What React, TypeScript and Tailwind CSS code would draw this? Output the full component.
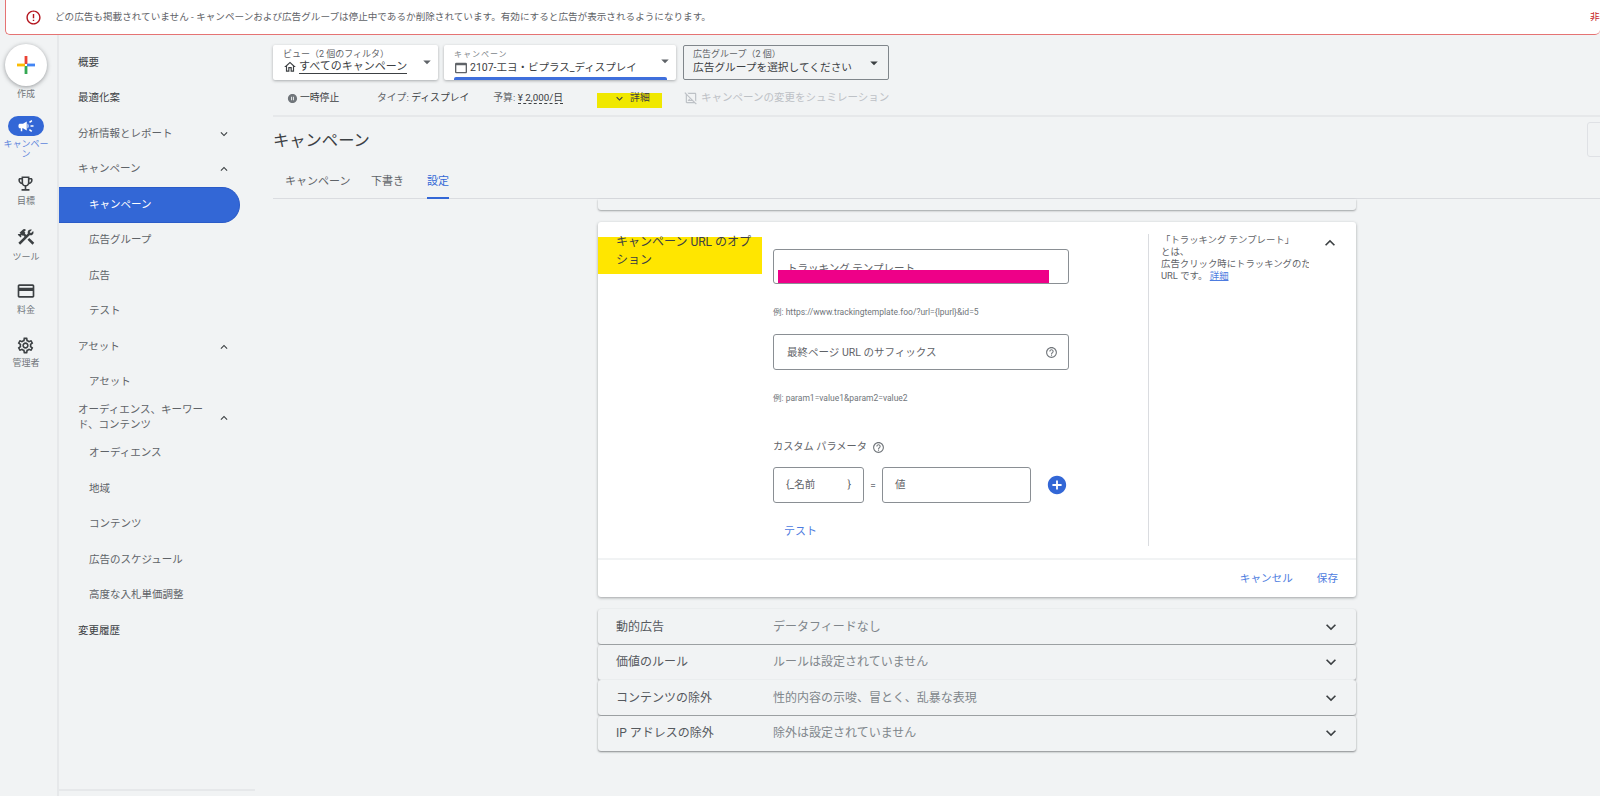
import type { ReactNode } from 'react';
import {
  MdArrowDropDown,
  MdAddCircle,
  MdCampaign,
  MdErrorOutline,
  MdExpandLess,
  MdExpandMore,
  MdHelpOutline,
  MdOutlineConstruction,
  MdOutlineCreditCard,
  MdOutlineEmojiEvents,
  MdOutlineHome,
  MdOutlineImageNotSupported,
  MdOutlineSettings,
  MdOutlineWebAsset,
  MdPauseCircleFilled,
} from 'react-icons/md';

const font = 'font-["Roboto","Noto_Sans_CJK_JP",sans-serif]';

function RailItem({ icon, label, gap }: { icon: ReactNode; label: string; gap: string }) {
  return (
    <div className="flex h-[54px] flex-col items-center text-[#70757a]">
      <div className="flex h-[20px] items-center">{icon}</div>
      <span className={`${gap} text-[9px] leading-[12px]`}>{label}</span>
    </div>
  );
}

function Rail() {
  return (
    <div className="flex w-[59px] shrink-0 flex-col items-center border-r-2 border-[#e6e8ea] pt-[9px] pr-[5px]">
      <div className="flex h-[42px] w-[42px] items-center justify-center rounded-full bg-white shadow-[0_1px_4px_rgba(60,64,67,0.5)]">
        <svg width="20" height="20" viewBox="0 0 20 20">
          <rect x="8.6" y="1" width="2.8" height="8" fill="#ea4335" />
          <rect x="11" y="8.6" width="8" height="2.8" fill="#4285f4" />
          <rect x="8.6" y="11" width="2.8" height="8" fill="#34a853" />
          <rect x="1" y="8.6" width="8" height="2.8" fill="#fbbc04" />
        </svg>
      </div>
      <span className="mt-[2px] text-[9px] leading-[12px] text-[#70757a]">作成</span>
      <div className="mt-[16px] flex h-[20px] w-[36px] items-center justify-center rounded-full bg-[#3367d6]">
        <MdCampaign size={18} color="#ffffff" />
      </div>
      <span className="mt-[3px] w-[46px] text-center text-[9px] leading-[10px] text-[#5f86dc]">キャンペーン</span>
      <div className="mt-[14px]">
        <RailItem icon={<MdOutlineEmojiEvents size={19} className="text-[#3c4043]" />} label="目標" gap="mt-[2px]" />
        <RailItem icon={<MdOutlineConstruction size={20} className="text-[#3c4043]" />} label="ツール" gap="mt-[4px]" />
        <RailItem icon={<MdOutlineCreditCard size={20} className="text-[#3c4043]" />} label="料金" gap="mt-[3px]" />
        <RailItem icon={<MdOutlineSettings size={19} className="text-[#3c4043]" />} label="管理者" gap="mt-[2px]" />
      </div>
    </div>
  );
}

function NavRow({ label, sub, open, active, dark }: { label: string; sub?: boolean; open?: boolean; active?: boolean; dark?: boolean }) {
  if (active) {
    return (
      <div className="flex h-[35.5px] w-[181px] items-center rounded-r-full border border-l-0 border-[#2a5bc8] bg-[#3367d6] pl-[30px] text-[10.5px] text-white">
        {label}
      </div>
    );
  }
  return (
    <div className={`flex h-[35.5px] items-center pr-[24px] text-[10.5px] leading-[14.5px] ${sub ? 'pl-[30px]' : 'pl-[19px]'} ${dark ? 'text-[#3c4043]' : 'text-[#5f6368]'}`}>
      <span className="w-[130px] shrink-0">{label}</span>
      {open === true && <MdExpandLess size={14} className="ml-auto text-[#3c4043]" />}
      {open === false && <MdExpandMore size={14} className="ml-auto text-[#3c4043]" />}
    </div>
  );
}

function Sidebar() {
  return (
    <div className="flex w-[196px] shrink-0 flex-col pt-[10px]">
      <NavRow label="概要" dark />
      <NavRow label="最適化案" dark />
      <NavRow label="分析情報とレポート" open={false} />
      <NavRow label="キャンペーン" open={true} />
      <NavRow label="キャンペーン" active />
      <NavRow label="広告グループ" sub />
      <NavRow label="広告" sub />
      <NavRow label="テスト" sub />
      <NavRow label="アセット" open={true} />
      <NavRow label="アセット" sub />
      <NavRow label="オーディエンス、キーワード、コンテンツ" open={true} />
      <NavRow label="オーディエンス" sub />
      <NavRow label="地域" sub />
      <NavRow label="コンテンツ" sub />
      <NavRow label="広告のスケジュール" sub />
      <NavRow label="高度な入札単価調整" sub />
      <NavRow label="変更履歴" dark />
      <div className="mt-auto mb-[5px] h-[2px] bg-[#e6e8ea]" />
    </div>
  );
}

function FilterBar() {
  return (
    <div className="flex items-start pt-[10px]">
      <div className="relative h-[35px] w-[165px] rounded-[2px] bg-white pl-[10px] shadow-[0_1px_3px_rgba(60,64,67,0.4)]">
        <div className="pt-[3px] text-[9px] leading-[12px] text-[#5f6368]">ビュー（2 個のフィルタ）</div>
        <div className="flex items-center text-[11px] leading-[15px] text-[#3c4043]">
          <MdOutlineHome size={14} className="mr-[2px] text-[#3c4043]" />
          <span className="border-b border-[#3c4043] leading-[13px]">すべてのキャンペーン</span>
        </div>
        <MdArrowDropDown size={18} className="absolute top-[8px] right-[2px] text-[#5f6368]" />
      </div>
      <div className="relative ml-[6px] h-[35px] w-[232px] rounded-[2px] bg-white pl-[10px] shadow-[0_1px_3px_rgba(60,64,67,0.4)]">
        <div className="pt-[5px] text-[8px] leading-[10px] tracking-[1px] text-[#80868b]">キャンペーン</div>
        <div className="flex items-center text-[10.5px] leading-[14px] text-[#3c4043]">
          <MdOutlineWebAsset size={16} className="mr-[1px] -ml-[1px] text-[#5f6368]" />
          <span>2107-工ヨ・ビプラス_ディスプレイ</span>
        </div>
        <div className="absolute right-[9px] bottom-0 left-[10px] h-[3px] rounded-t-[2px] bg-[#3f6fdc]" />
        <MdArrowDropDown size={18} className="absolute top-[7px] right-[2px] text-[#5f6368]" />
      </div>
      <div className="relative ml-[7px] h-[35px] w-[206px] rounded-[2px] border border-[#80868b] pl-[9px]">
        <div className="pt-[2px] text-[9px] leading-[12px] text-[#5f6368]">広告グループ（2 個）</div>
        <div className="text-[10.7px] leading-[15px] text-[#3c4043]">広告グループを選択してください</div>
        <MdArrowDropDown size={18} className="absolute top-[8px] right-[5px] text-[#3c4043]" />
      </div>
    </div>
  );
}

function StatusBar() {
  return (
    <div className="flex h-[37px] items-start border-b-2 border-[#e6e8ea] pt-[10px] text-[9.8px] leading-[16px] text-[#5f6368]">
      <div className="ml-[14px] flex w-[90px] items-center text-[#3c4043]">
        <MdPauseCircleFilled size={11} className="mr-[2px] text-[#70757a]" />
        一時停止
      </div>
      <span>タイプ: <span className="text-[#3c4043]">ディスプレイ</span></span>
      <span className="ml-[24px]">予算: <span className="border-b border-dashed border-[#3c4043] text-[#3c4043]">¥ 2,000/日</span></span>
      <div className="mt-[3px] ml-[34px] flex h-[15px] w-[65px] bg-[#f0e800] pl-[16px] text-[#3c4043]">
        <div className="flex h-[16px] -translate-y-[3px] items-center">
          <MdExpandMore size={13} className="mr-[4px] text-[#3c4043]" />
          詳細
        </div>
      </div>
      <div className="ml-[22px] flex items-center text-[10.5px] text-[#bdc1c6]">
        <MdOutlineImageNotSupported size={14} className="mr-[3px]" />
        キャンペーンの変更をシュミレーション
      </div>
    </div>
  );
}

function Heading() {
  return (
    <div>
      <div className="relative flex h-[43px] items-center pt-[6px] text-[16.3px] text-[#3c4043]">
        キャンペーン
        <div className="absolute top-[5px] -right-[1px] h-[35px] w-[14px] rounded-l-[3px] border border-[#dfe1e5]" />
      </div>
      <div className="flex h-[39px] items-start border-b border-[#dadce0] pt-[14px] pl-[12px] text-[11px] leading-[16px]">
        <span className="w-[86px] text-[#5f6368]">キャンペーン</span>
        <span className="w-[56px] text-[#5f6368]">下書き</span>
        <div className="flex h-[25px] flex-col justify-between text-[#3367d6]">
          <span>設定</span>
          <div className="h-[2px] bg-[#3367d6]" />
        </div>
      </div>
    </div>
  );
}

function HelpIcon({ size = 13 }: { size?: number }) {
  return <MdHelpOutline size={size} className="text-[#70757a]" />;
}

function CampaignUrlCard() {
  return (
    <div className="mt-[12px] w-[758px] rounded-[3px] bg-white shadow-[0_1px_3px_rgba(60,64,67,0.45)]">
      <div className="flex h-[336px]">
        <div className="w-[164px] shrink-0 pt-[15px]">
          <div className="h-[37px] bg-[#ffe600] pl-[18px] text-[12px] leading-[18px] text-[#3c4043]">
            <div className="w-[138px] -translate-y-[4px]">キャンペーン URL のオプション</div>
          </div>
        </div>
        <div className="ml-[11px] w-[375px] shrink-0 pt-[27px]">
          <div className="relative flex h-[35px] w-[296px] items-center rounded-[3px] border border-[#8a8f94] pl-[13px] text-[10.5px] text-[#5f6368]">
            <span className="-mb-[5px]">トラッキング テンプレート</span>
            <div className="absolute right-[19px] bottom-0 left-[4px] h-[13px] bg-[#ee0088]" />
          </div>
          <div className="mt-[22px] h-[12px] text-[8.5px] leading-[12px] text-[#70757a]">例: https://www.trackingtemplate.foo/?url={'{'}lpurl{'}'}&amp;id=5</div>
          <div className="mt-[16px] flex h-[36px] w-[296px] items-center justify-between rounded-[3px] border border-[#8a8f94] pt-[1px] pr-[10px] pl-[13px] text-[10.5px] text-[#5f6368]">
            最終ページ URL のサフィックス
            <HelpIcon />
          </div>
          <div className="mt-[22px] h-[12px] text-[8.5px] leading-[12px] text-[#70757a]">例: param1=value1&amp;param2=value2</div>
          <div className="mt-[36px] flex h-[14px] items-center text-[10.2px] text-[#5f6368]">
            カスタム パラメータ
            <span className="ml-[5px] flex"><HelpIcon /></span>
          </div>
          <div className="mt-[13px] flex h-[36px] items-center">
            <div className="flex h-full w-[91px] items-center justify-between rounded-[3px] border border-[#8a8f94] pr-[12px] pl-[12px] text-[10.5px] text-[#5f6368]">
              <span>{'{_名前'}</span>
              <span>{'}'}</span>
            </div>
            <span className="w-[18px] text-center text-[10px] text-[#80868b]">=</span>
            <div className="flex h-full w-[149px] items-center rounded-[3px] border border-[#8a8f94] pl-[12px] text-[10.5px] text-[#5f6368]">値</div>
            <MdAddCircle size={22} className="ml-[15px] text-[#3367d6]" />
          </div>
          <div className="mt-[22px] pl-[11px] text-[11px] leading-[14px] text-[#4d7ce0]">テスト</div>
        </div>
        <div className="mt-[12px] mb-[12px] flex w-[207px] shrink-0 border-l border-[#dadce0] pl-[12px]">
          <div className="w-[148px] overflow-hidden text-[9.4px] leading-[12px] whitespace-nowrap text-[#5f6368]">
            <div>「トラッキング テンプレート」</div>
            <div>とは、</div>
            <div>広告クリック時にトラッキングのために使用される</div>
            <div>URL です。 <span className="text-[#4d7ce0] underline">詳細</span></div>
          </div>
          <MdExpandLess size={20} className="mt-[-1px] ml-[11px] text-[#3c4043]" />
        </div>
      </div>
      <div className="flex h-[39px] items-center justify-end border-t-2 border-[#f1f3f4] pr-[18px] text-[10.6px] text-[#4d7ce0]">
        <span>キャンセル</span>
        <span className="ml-[24px]">保存</span>
      </div>
    </div>
  );
}

function CollapsedRow({ label, value }: { label: string; value: string }) {
  return (
    <div className="mb-[0.5px] flex h-[35px] w-[758px] items-center rounded-[3px] bg-[#f1f3f4] pr-[15px] pl-[18px] text-[12px] shadow-[0_1px_2px_rgba(60,64,67,0.6)]">
      <span className="w-[157px] text-[#55595e]">{label}</span>
      <span className="text-[#80868b]">{value}</span>
      <MdExpandMore size={20} className="ml-auto text-[#3c4043]" />
    </div>
  );
}

function Content() {
  return (
    <div className="ml-[325px] flex-1">
      <div className="h-[11px] w-[758px] rounded-b-[3px] shadow-[0_1px_2px_rgba(60,64,67,0.45)]" />
      <CampaignUrlCard />
      <div className="mt-[12px] flex flex-col">
        <CollapsedRow label="動的広告" value="データフィードなし" />
        <CollapsedRow label="価値のルール" value="ルールは設定されていません" />
        <CollapsedRow label="コンテンツの除外" value="性的内容の示唆、冒とく、乱暴な表現" />
        <CollapsedRow label="IP アドレスの除外" value="除外は設定されていません" />
      </div>
    </div>
  );
}

export default function App() {
  return (
    <div className={`flex h-[796px] w-[1600px] flex-col overflow-hidden bg-[#f1f3f4] ${font}`}>
      <div className="ml-[5px] flex h-[35px] shrink-0 items-center rounded-b-[5px] border-b border-l border-[#e57373] bg-white pl-[19px] text-[9.6px] text-[#5f6368]">
        <MdErrorOutline size={17} className="text-[#b3141d]" />
        <span className="ml-[13px]">どの広告も掲載されていません - キャンペーンおよび広告グループは停止中であるか削除されています。有効にすると広告が表示されるようになります。</span>
        <span className="ml-auto w-[10px] overflow-hidden whitespace-nowrap text-[#c5221f]">非表示</span>
      </div>
      <div className="flex min-h-0 flex-1">
        <Rail />
        <Sidebar />
        <div className="flex min-w-0 flex-1 flex-col pl-[18px]">
          <FilterBar />
          <StatusBar />
          <Heading />
          <Content />
        </div>
      </div>
    </div>
  );
}
